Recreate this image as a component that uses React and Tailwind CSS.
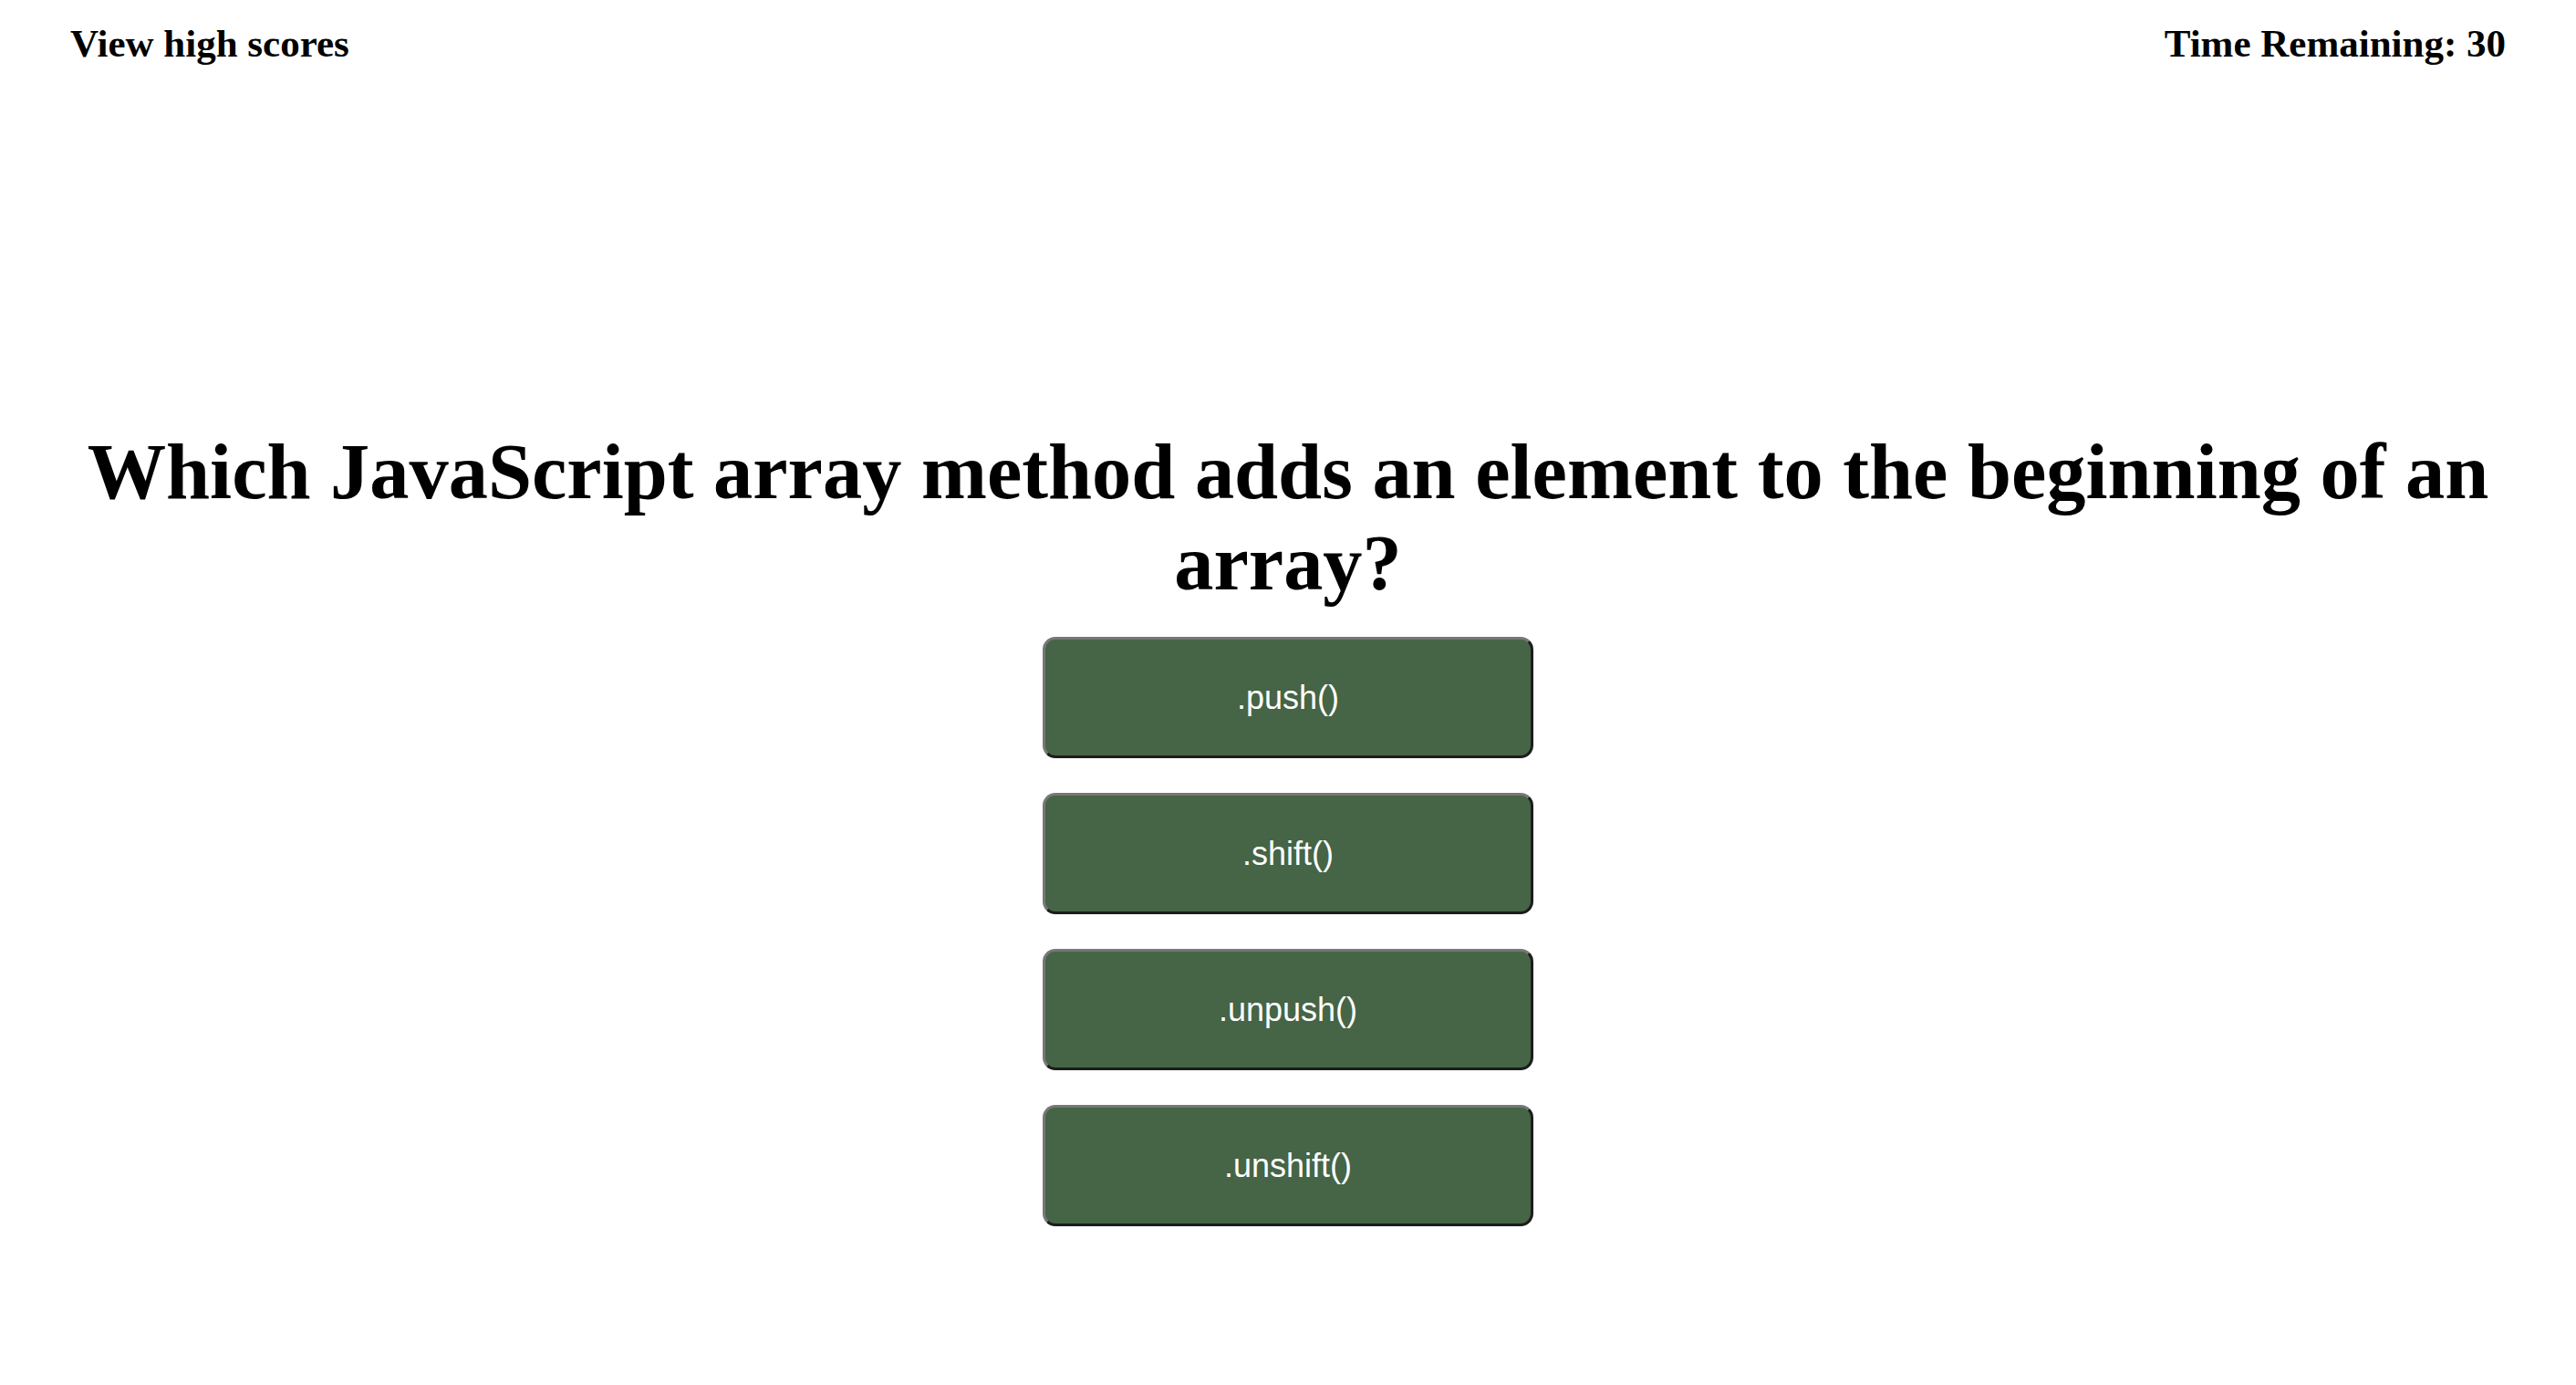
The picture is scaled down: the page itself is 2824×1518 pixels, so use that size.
// App.jsx
const answers = [".push()", ".shift()", ".unpush()", ".unshift()"];

export default function App() {
  return (
    <div className="min-h-screen bg-white text-black font-['Liberation_Serif','Times_New_Roman',serif]">
      <header className="flex justify-between px-[77px] pt-[23px]">
        <a className="text-[43px] font-bold leading-[1.15] cursor-pointer">View high scores</a>
        <p className="text-[43px] font-bold leading-[1.15]">Time Remaining: 30</p>
      </header>

      <main className="flex flex-col items-center mt-[396px]">
        <h1 className="text-[86.4px] font-bold leading-[1.15] text-center px-[40px]">
          Which JavaScript array method adds an element to the beginning of an array?
        </h1>

        <div className="flex flex-col gap-[38px] mt-[31px]">
          {answers.map((a) => (
            <button
              key={a}
              className="w-[538px] h-[133px] rounded-[14px] bg-[#466446] text-white text-[36px] font-['Liberation_Sans',Arial,sans-serif] border-[3px] border-t-[#777777] border-l-[#777777] border-b-[#1c1c1c] border-r-[#1c1c1c]"
            >
              {a}
            </button>
          ))}
        </div>
      </main>
    </div>
  );
}
